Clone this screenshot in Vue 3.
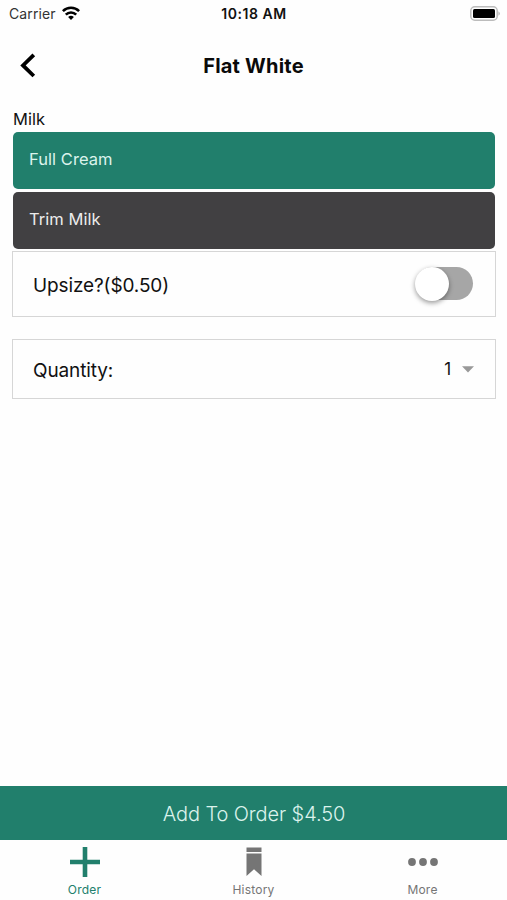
<script setup>
import { ref } from 'vue'

const milks = ['Full Cream', 'Trim Milk']
const selectedMilk = ref('Full Cream')
const upsize = ref(false)
</script>

<template>
  <div class="screen">
    <div class="status">
      <div class="carrier">
        <span class="carrier-name">Carrier</span>
        <svg class="wifi" width="18" height="14" viewBox="0 0 18 14" fill="none" stroke="#000" stroke-width="2.6">
          <path d="M0.9 5.1C5.4 0.7 12.6 0.7 17.1 5.1" />
          <path d="M3.8 8.6C6.7 5.7 11.3 5.7 14.2 8.6" />
          <path d="M9 14L6.1 11.1Q9 8.5 11.9 11.1Z" fill="#000" stroke="none" />
        </svg>
      </div>
      <span class="time">10:18 AM</span>
      <svg class="battery" width="31" height="15" viewBox="0 0 31 15">
        <rect x="0.8" y="0.8" width="26.4" height="13.4" rx="4" fill="#fff" stroke="#bcbcbc" stroke-width="1.5" />
        <rect x="3" y="3" width="22" height="9" rx="1.5" fill="#000" />
        <path d="M28.5 5.2Q31 7.5 28.5 9.8Z" fill="#aaa" />
      </svg>
    </div>

    <header class="header">
      <svg class="back" width="18" height="26" viewBox="0 0 18 26" fill="none" stroke="#000" stroke-width="3.8">
        <path d="M14.8 2.8L4 13.4L14.8 24" />
      </svg>
      <h1 class="title">Flat White</h1>
      <span></span>
    </header>

    <main class="content">
      <div class="group-label">Milk</div>
      <div class="options">
        <button
          v-for="m in milks"
          :key="m"
          class="option"
          :class="{ selected: m === selectedMilk }"
          @click="selectedMilk = m"
        >{{ m }}</button>
      </div>

      <div class="row upsize">
        <span class="upsize-label">Upsize?($0.50)</span>
        <div class="switch" :class="{ on: upsize }" @click="upsize = !upsize"><div class="knob"></div></div>
      </div>

      <div class="row quantity">
        <span class="quantity-label">Quantity:</span>
        <div class="picker">
          <span>1</span>
          <svg width="12" height="7" viewBox="0 0 12 7"><path d="M0 0.3H12L6 6.5Z" fill="#999" /></svg>
        </div>
      </div>
    </main>

    <button class="add"><span class="add-label">Add To Order $4.50</span></button>

    <nav class="tabs">
      <div class="tab active">
        <svg width="30" height="30" viewBox="0 0 30 30"><path d="M12.7 0H17.3V12.7H30V17.3H17.3V30H12.7V17.3H0V12.7H12.7Z" fill="currentColor" /></svg>
        <span class="tab-order">Order</span>
      </div>
      <div class="tab">
        <svg width="30" height="30" viewBox="0 0 30 30" fill="currentColor">
          <path d="M7.5 0.5H22.5V5H7.5Z" />
          <path d="M7.5 6.6H22.5V29L15 22.2L7.5 29Z" />
        </svg>
        <span class="tab-history">History</span>
      </div>
      <div class="tab">
        <svg width="30" height="30" viewBox="0 0 30 30" fill="currentColor">
          <circle cx="4" cy="15" r="3.9" />
          <circle cx="15" cy="15" r="3.9" />
          <circle cx="26" cy="15" r="3.9" />
        </svg>
        <span class="tab-more">More</span>
      </div>
    </nav>
  </div>
</template>

<style>
body {
  background: #fff;
}
</style>

<style scoped>
.screen {
  height: 900px;
  display: flex;
  flex-direction: column;
  background: #fefefe;
  color: #111;
  font-family: Inter, "Liberation Sans", sans-serif;
}
.status {
  height: 27px;
  display: grid;
  grid-template-columns: 1fr auto 1fr;
  align-items: center;
  padding: 0 6px 0 9px;
  box-sizing: border-box;
}
.carrier {
  display: flex;
  align-items: center;
  gap: 6px;
  font-size: 14px;
  letter-spacing: 0.1px;
  color: #333;
}
.wifi {
  margin-bottom: 1px;
}
.time {
  font-size: 14px;
  font-weight: 600;
  letter-spacing: 0.55px;
  margin-right: 2px;
}
.battery {
  justify-self: end;
  margin-bottom: 1px;
}
.header {
  height: 77px;
  display: grid;
  grid-template-columns: 1fr auto 1fr;
  align-items: center;
  padding: 0 19px;
}
.back {
  margin-bottom: 1px;
}
.title {
  margin: 0;
  font-size: 20px;
  font-weight: 700;
  letter-spacing: 0.2px;
  color: #0a0a0a;
}
.content {
  flex: 1;
  padding: 6px 11px 0 12px;
}
.group-label {
  height: 22px;
  line-height: 19px;
  padding-left: 1px;
  font-size: 16.5px;
}
.options {
  display: flex;
  flex-direction: column;
  gap: 3px;
  padding: 0 1px 2px;
}
.option {
  height: 57px;
  border: 0;
  border-radius: 5px;
  padding: 0 16px 4px;
  text-align: left;
  font: 400 16.5px Inter, "Liberation Sans", sans-serif;
  letter-spacing: 0.05px;
  color: #ececec;
  background: #414042;
}
.option.selected {
  background: #217f6c;
  color: #dcf3ec;
}
.row {
  display: flex;
  align-items: center;
  justify-content: space-between;
  box-sizing: border-box;
  border: 1.5px solid #d6d6d6;
  padding-left: 20px;
  font-size: 19px;
  letter-spacing: -0.12px;
}
.upsize-label,
.quantity-label {
  padding-top: 2px;
}
.upsize {
  height: 66px;
  padding-right: 22px;
}
.switch {
  width: 57px;
  height: 33px;
  margin-bottom: 1px;
  border-radius: 17px;
  background: #a6a6a6;
}
.knob {
  width: 34px;
  height: 34px;
  margin-left: -1px;
  border-radius: 50%;
  background: #fff;
  box-shadow: 0 2px 5px rgba(0, 0, 0, 0.4);
}
.switch.on {
  background: #217f6c;
}
.switch.on .knob {
  margin-left: auto;
}
.quantity {
  height: 60px;
  margin-top: 22px;
  padding-right: 21px;
}
.picker {
  display: flex;
  align-items: center;
  gap: 11px;
  font-size: 17px;
}
.add {
  height: 54px;
  border: 0;
  padding: 1px 0 0 1px;
  background: #217f6c;
  color: #dcf3ec;
  font: 300 20px Inter, "Liberation Sans", sans-serif;
  letter-spacing: -0.1px;
}
.tabs {
  height: 60px;
  display: grid;
  grid-template-columns: repeat(3, 1fr);
}
.tab {
  display: flex;
  flex-direction: column;
  align-items: center;
  padding-top: 7px;
  gap: 5px;
  font-size: 12px;
  line-height: 15px;
  letter-spacing: 0.2px;
  color: #757575;
}
.tab.active {
  color: #217f6c;
}
</style>
